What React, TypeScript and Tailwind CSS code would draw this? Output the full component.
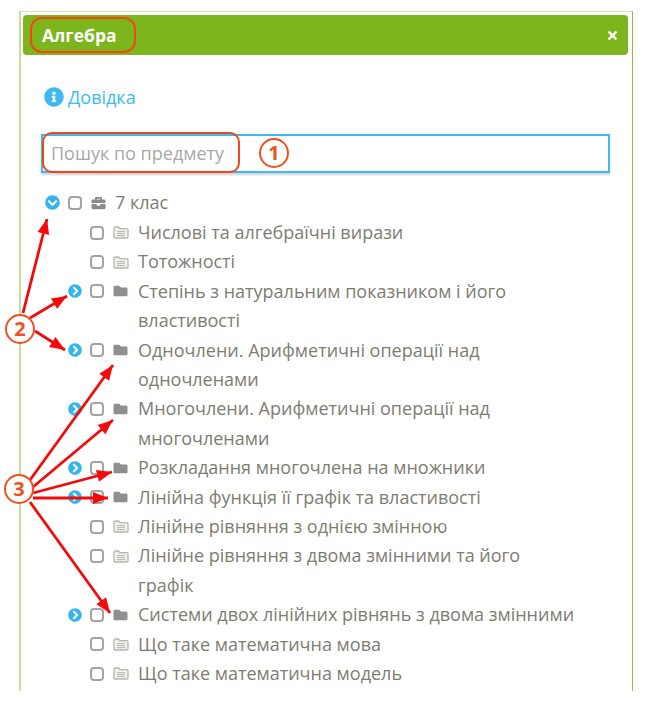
import { FaBriefcase, FaChevronCircleDown, FaChevronCircleRight, FaFolder, FaInfoCircle, FaTimes } from "react-icons/fa";

type Topic = { label: string; second?: string; hasChildren?: boolean };

const topics: Topic[] = [
  { label: "Числові та алгебраїчні вирази" },
  { label: "Тотожності" },
  { label: "Степінь з натуральним показником і його", second: "властивості", hasChildren: true },
  { label: "Одночлени. Арифметичні операції над", second: "одночленами", hasChildren: true },
  { label: "Многочлени. Арифметичні операції над", second: "многочленами", hasChildren: true },
  { label: "Розкладання многочлена на множники", hasChildren: true },
  { label: "Лінійна функція її графік та властивості", hasChildren: true },
  { label: "Лінійне рівняння з однією змінною" },
  { label: "Лінійне рівняння з двома змінними та його", second: "графік" },
  { label: "Системи двох лінійних рівнянь з двома змінними", hasChildren: true },
  { label: "Що таке математична мова" },
  { label: "Що таке математична модель" },
];

// [x1, y1, tipX, tipY]
const arrows = [
  [23, 313, 47, 219],
  [30, 318, 67, 296],
  [35, 331, 65, 350],
  [30, 480, 113, 365],
  [33, 487, 113, 420],
  [33, 493, 112, 472],
  [33, 498, 108, 498],
  [30, 502, 110, 613],
];

function arrowHead(x1: number, y1: number, x2: number, y2: number) {
  const len = Math.hypot(x2 - x1, y2 - y1);
  const ux = (x2 - x1) / len;
  const uy = (y2 - y1) / len;
  const bx = x2 - ux * 15;
  const by = y2 - uy * 15;
  return `${x2},${y2} ${bx - uy * 6},${by + ux * 6} ${bx + uy * 6},${by - ux * 6}`;
}

function Checkbox() {
  return <span className="h-[14px] w-[14px] shrink-0 rounded-[4px] border-2 border-[#a3a3a3] bg-white" />;
}

function LeafFolder() {
  return (
    <svg viewBox="0 0 16 13" className="h-[13px] w-[16px] shrink-0" fill="none" stroke="#b5b5b0" strokeWidth="1.3">
      <path d="M1 11V2.2C1 1.5 1.5 1 2.2 1h3.4l1.3 1.6h6.9c.7 0 1.2.5 1.2 1.2V11c0 .6-.5 1-1.2 1H2.2C1.5 12 1 11.6 1 11z" fill="#f1f1ee" />
      <path d="M4 5.6h8M4 7.6h8M4 9.6h8" strokeWidth="1" />
    </svg>
  );
}

function TopicRow({ topic }: { topic: Topic }) {
  return (
    <div className="flex items-start">
      <div className="flex h-[29.4px] w-[25px] shrink-0 items-center justify-center">
        {topic.hasChildren && <FaChevronCircleRight className="text-[14px] text-[#33b5ee]" />}
      </div>
      <div className="flex h-[29.4px] w-[51px] shrink-0 items-center gap-[9px] pl-[3px]">
        <Checkbox />
        {topic.hasChildren ? <FaFolder className="h-[14px] w-[15px] shrink-0 text-[#8f8f8f]" /> : <LeafFolder />}
      </div>
      <div>
        <div>{topic.label}</div>
        {topic.second && <div>{topic.second}</div>}
      </div>
    </div>
  );
}

function Badge({ n, className }: { n: number; className: string }) {
  return (
    <div className={`absolute flex h-[30px] w-[30px] items-center justify-center rounded-full border-2 border-[#f0501e] bg-white text-[20px] font-bold text-[#f0501e] ${className}`}>
      {n}
    </div>
  );
}

export default function App() {
  return (
    <div className="relative h-[711px] w-[658px] overflow-hidden bg-white font-['Open_Sans',sans-serif]">
      <div className="ml-[19px] h-[691px] pt-[11px]">
        <div className="h-[680px] w-[614px] border-t border-r border-l-2 border-t-[#cfe5ac] border-r-[#8dbd3a] border-l-[#c3dd9c] px-[2px] pt-[3px]">
          {/* header */}
          <div className="flex h-[40px] w-[605px] items-center justify-between rounded-[4px] bg-[#7cb51c] pr-[9px] pl-[19px] text-white">
            <span className="text-[17.5px] font-bold">Алгебра</span>
            <FaTimes className="text-[13px]" />
          </div>

          {/* help link */}
          <div className="mt-[31px] ml-[21px] flex items-center gap-[4px] text-[18px] leading-[22px] text-[#3dbbf0]">
            <FaInfoCircle className="text-[20px]" />
            <span>Довідка</span>
          </div>

          {/* search */}
          <div className="mt-[26px] ml-[18px] flex h-[39px] w-[569px] items-center border-2 border-[#3dbbf0] pl-[8px] text-[18px] text-[#a8a8a8] shadow-[0_2px_2px_rgba(0,0,0,0.18)]">
            Пошук по предмету
          </div>

          {/* tree */}
          <div className="mt-[15px] ml-[22px] text-[18px] leading-[29.4px] text-[#7d7d72]">
            <div className="flex items-center">
              <FaChevronCircleDown className="mr-[8px] text-[15px] text-[#33b5ee]" />
              <Checkbox />
              <FaBriefcase className="mr-[9px] ml-[9px] h-[14px] w-[15px] text-[#8a8a8a]" />
              <span>7 клас</span>
            </div>
            <div className="mt-[0.5px] ml-[17px]">
              {topics.map((t) => (
                <TopicRow key={t.label} topic={t} />
              ))}
            </div>
          </div>
        </div>
      </div>

      {/* annotations drawn over the screenshot */}
      <div className="absolute top-[17px] left-[30px] h-[36px] w-[106px] rounded-[12px] border-[2.5px] border-[#f0481a]" />
      <div className="absolute top-[132px] left-[42px] h-[41px] w-[198px] rounded-[10px] border-[2.5px] border-[#f0481a]" />
      <svg className="absolute top-0 left-0" width="658" height="711" viewBox="0 0 658 711">
        {arrows.map(([x1, y1, x2, y2]) => (
          <g key={`${x2}-${y2}`}>
            <line x1={x1} y1={y1} x2={x2} y2={y2} stroke="#f40a0a" strokeWidth="2.8" />
            <polygon points={arrowHead(x1, y1, x2, y2)} fill="#f40a0a" />
          </g>
        ))}
      </svg>
      <Badge n={1} className="top-[138px] left-[259px]" />
      <Badge n={2} className="top-[314px] left-[5px]" />
      <Badge n={3} className="top-[474px] left-[4px]" />
    </div>
  );
}
